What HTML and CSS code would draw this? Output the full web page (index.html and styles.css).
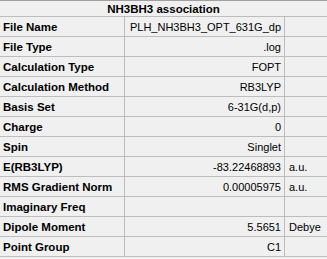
FILE: index.html
```html
<!DOCTYPE html>
<html>
<head>
<meta charset="utf-8">
<link rel="stylesheet" href="styles.css">
</head>
<body>
<div class="grid">
  <div class="head">NH3BH3 association</div>
  <div class="lab">File Name</div><div class="val">PLH_NH3BH3_OPT_631G_dp</div><div class="unit"></div>
  <div class="lab">File Type</div><div class="val">.log</div><div class="unit"></div>
  <div class="lab">Calculation Type</div><div class="val">FOPT</div><div class="unit"></div>
  <div class="lab">Calculation Method</div><div class="val">RB3LYP</div><div class="unit"></div>
  <div class="lab">Basis Set</div><div class="val">6-31G(d,p)</div><div class="unit"></div>
  <div class="lab">Charge</div><div class="val">0</div><div class="unit"></div>
  <div class="lab">Spin</div><div class="val">Singlet</div><div class="unit"></div>
  <div class="lab">E(RB3LYP)</div><div class="val">-83.22468893</div><div class="unit">a.u.</div>
  <div class="lab">RMS Gradient Norm</div><div class="val">0.00005975</div><div class="unit">a.u.</div>
  <div class="lab">Imaginary Freq</div><div class="val"></div><div class="unit"></div>
  <div class="lab">Dipole Moment</div><div class="val">5.5651</div><div class="unit">Debye</div>
  <div class="lab">Point Group</div><div class="val">C1</div><div class="unit"></div>
</div>
</body>
</html>
```

FILE: styles.css
```css
html, body {
  margin: 0;
  padding: 0;
  background: #f0f0f0;
}
body {
  font-family: "Liberation Sans", Arial, sans-serif;
  font-size: 11px;
  color: #000;
}
.grid {
  display: grid;
  grid-template-columns: 124px 159px 1fr;
  grid-auto-rows: 19px;
  grid-template-rows: 15px;
  gap: 1px;
  background: #bdbdbd;
  border-top: 1px solid #a0a0a0;
  border-bottom: 1px solid #bdbdbd;
}
.grid > div {
  background: #f0f0f0;
  display: flex;
  align-items: center;
  white-space: nowrap;
  overflow: hidden;
}
.head {
  grid-column: 1 / -1;
  justify-content: center;
  font-weight: bold;
  font-size: 11.5px;
}
.lab {
  font-weight: bold;
  font-size: 11.5px;
  padding-left: 3px;
}
.val {
  justify-content: flex-end;
  padding-right: 3px;
}
.unit {
  padding-left: 4px;
}
```
